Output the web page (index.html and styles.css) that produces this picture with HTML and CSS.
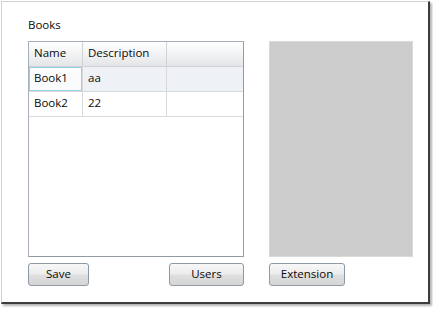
FILE: index.html
```html
<html>
  <head>
    <link rel="stylesheet" href="styles.css">
  </head>
  <body>
    <div class="window">
      <div class="label">Books</div>
      <div class="content">
        <div class="datagrid">
          <div class="cell head">Name</div>
          <div class="cell head">Description</div>
          <div class="cell head last"></div>
          <div class="cell alt focus">Book1</div>
          <div class="cell alt">aa</div>
          <div class="cell alt last"></div>
          <div class="cell">Book2</div>
          <div class="cell">22</div>
          <div class="cell last"></div>
        </div>
        <div class="panel"></div>
        <div class="buttons">
          <button class="btn save">Save</button>
          <button class="btn users">Users</button>
        </div>
        <div class="buttons">
          <button class="btn extension">Extension</button>
        </div>
      </div>
    </div>
  </body>
</html>
```

FILE: styles.css
```css
html {
  background: white;
  color: #0a0a0a;
  font-family: "Open Sans", sans-serif;
  font-size: 11.5px;
}
body {
  margin: 0;
}
.window {
  box-sizing: border-box;
  margin: 1px 0 0 1px;
  width: 429px;
  height: 303px;
  padding: 15px 0 0 26px;
  background: white;
  border-top: 1px solid #d2d2d2;
  border-left: 1px solid #d2d2d2;
  border-right: 2px solid #3c3c3c;
  border-bottom: 2px solid #3c3c3c;
  box-shadow: 2px 2px 2px rgba(0, 0, 0, 0.3);
}
.label {
  line-height: 16px;
  margin-bottom: 8px;
}
.content {
  display: grid;
  grid-template-columns: 216px 144px;
  grid-template-rows: 216px 23px;
  column-gap: 25px;
  row-gap: 6px;
}
.datagrid {
  box-sizing: border-box;
  display: grid;
  grid-template-columns: 54px 84px 1fr;
  grid-auto-rows: 25px;
  align-content: start;
  border: 1px solid #a9afb6;
  border-right-color: #949aa1;
  border-bottom-color: #949aa1;
  background: white;
}
.cell {
  box-sizing: border-box;
  border-right: 1px solid #d9d9d9;
  border-bottom: 1px solid #d9d9d9;
  padding: 0 5px;
  line-height: 22px;
  white-space: nowrap;
}
.cell.last {
  border-right: none;
}
.cell.head {
  background: linear-gradient(#ffffff, #f3f4f5 45%, #e3e5e8);
  border-right-color: #d0d2d5;
  border-bottom-color: #cfd1d4;
}
.cell.alt {
  background: #eef2f7;
}
.cell.focus {
  background: #f9fbfd;
  box-shadow: inset 0 0 0 1px #96d0e3;
}
.panel {
  box-sizing: border-box;
  background: #cccccc;
  border: 1px solid #dadada;
}
.buttons {
  display: flex;
  justify-content: space-between;
}
.btn {
  box-sizing: border-box;
  height: 23px;
  padding: 0 0 1px;
  font-family: inherit;
  font-size: inherit;
  color: #0a0a0a;
  line-height: 20px;
  border: 1px solid #8e99a5;
  border-radius: 3px;
  background: linear-gradient(#f8f8f8, #ececec 48%, #dfdfdf 52%, #d5d5d5);
}
.btn.save {
  width: 61px;
}
.btn.users {
  width: 75px;
}
.btn.extension {
  width: 76px;
}
```
